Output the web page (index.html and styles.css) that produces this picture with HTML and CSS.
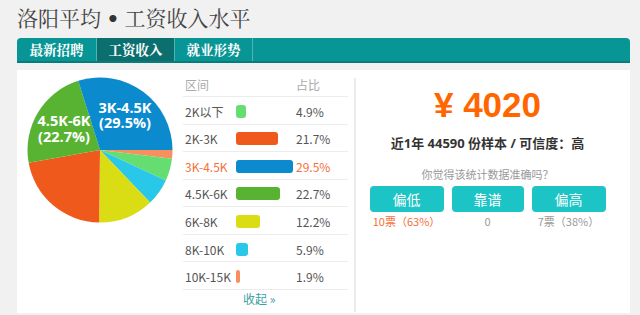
FILE: index.html
```html
<!DOCTYPE html>
<html lang="zh">
<head>
<meta charset="utf-8">
<title>洛阳平均工资收入水平</title>
<link rel="stylesheet" href="styles.css">
</head>
<body>
<h1 class="title">洛阳平均 <span class="dot">•</span> 工资收入水平</h1>
<nav class="nav">
  <a class="tab">最新招聘</a>
  <a class="tab active">工资收入</a>
  <a class="tab">就业形势</a>
</nav>
<div class="content">
  <div class="left">
    <svg class="pie" width="150" height="150" viewBox="0 0 150 150">
      <path d="M75 75 L147.5 75 A72.5 72.5 0 0 1 146.97 83.74 Z" fill="#f88f5e"/>
      <path d="M75 75 L146.97 83.74 A72.5 72.5 0 0 1 140.83 105.38 Z" fill="#66dd70"/>
      <path d="M75 75 L140.83 105.38 A72.5 72.5 0 0 1 125.12 127.39 Z" fill="#2ac8e8"/>
      <path d="M75 75 L125.12 127.39 A72.5 72.5 0 0 1 74.08 147.49 Z" fill="#dadd14"/>
      <path d="M75 75 L74.08 147.49 A72.5 72.5 0 0 1 3.65 87.84 Z" fill="#ef5a1c"/>
      <path d="M75 75 L3.65 87.84 A72.5 72.5 0 0 1 53.21 5.85 Z" fill="#58b333"/>
      <path d="M75 75 L53.21 5.85 A72.5 72.5 0 0 1 147.5 75 Z" fill="#0b8bcd"/>
      <text class="plabel"><tspan x="100" y="38">3K-4.5K</tspan><tspan x="100" y="53">(29.5%)</tspan></text>
      <text class="plabel"><tspan x="39" y="51">4.5K-6K</tspan><tspan x="39" y="67">(22.7%)</tspan></text>
    </svg>
    <div class="table">
      <div class="row head"><span class="c1">区间</span><span class="c2"></span><span class="c3">占比</span></div>
      <div class="row"><span class="c1">2K以下</span><span class="c2"><i class="bar" style="width:10px;background:#66dd70"></i></span><span class="c3">4.9%</span></div>
      <div class="row"><span class="c1">2K-3K</span><span class="c2"><i class="bar" style="width:42px;background:#ef5a1c"></i></span><span class="c3">21.7%</span></div>
      <div class="row hl"><span class="c1">3K-4.5K</span><span class="c2"><i class="bar" style="width:57px;background:#0b8bcd"></i></span><span class="c3">29.5%</span></div>
      <div class="row"><span class="c1">4.5K-6K</span><span class="c2"><i class="bar" style="width:44px;background:#58b333"></i></span><span class="c3">22.7%</span></div>
      <div class="row"><span class="c1">6K-8K</span><span class="c2"><i class="bar" style="width:24px;background:#dadd14"></i></span><span class="c3">12.2%</span></div>
      <div class="row"><span class="c1">8K-10K</span><span class="c2"><i class="bar" style="width:12px;background:#2ac8e8"></i></span><span class="c3">5.9%</span></div>
      <div class="row"><span class="c1">10K-15K</span><span class="c2"><i class="bar thin" style="width:4px;background:#f88f5e"></i></span><span class="c3">1.9%</span></div>
      <a class="fold">收起 »</a>
    </div>
  </div>
  <div class="sep"></div>
  <div class="right">
    <div class="price">¥ 4020</div>
    <div class="sub">近1年 44590 份样本 / 可信度：高</div>
    <div class="ask">你觉得该统计数据准确吗？</div>
    <div class="btns">
      <a class="btn w74">偏低</a>
      <a class="btn w72">靠谱</a>
      <a class="btn w74">偏高</a>
    </div>
    <div class="votes">
      <span class="w74 hot">10票（63%）</span>
      <span class="w72">0</span>
      <span class="w74">7票（38%）</span>
    </div>
  </div>
</div>
</body>
</html>
```
FILE: styles.css
```css
* { box-sizing: border-box; }
body {
  margin: 0;
  padding: 0 10px 0 17px;
  background: #f1f1f1;
  font-family: "Open Sans", "Noto Sans CJK SC", sans-serif;
  color: #555;
}
.title {
  margin: 0;
  height: 38px;
  line-height: 35px;
  font-size: 21px;
  font-weight: normal;
  color: #444;
  font-family: "Noto Serif CJK SC", "Noto Sans CJK SC", serif;
}
.title .dot {
  font-family: "DejaVu Sans", sans-serif;
  font-size: 20px;
  font-weight: bold;
  color: #333;
}
.nav {
  display: flex;
  width: 613px;
  height: 25px;
  background: #089595;
  border-radius: 4px 4px 0 0;
  border-bottom: 2px solid #0a7b7b;
}
.tab {
  width: 80px;
  text-align: center;
  color: #fff;
  font-weight: bold;
  font-size: 13.5px;
  line-height: 23px;
  font-family: "Noto Serif CJK SC", "Noto Sans CJK SC", serif;
  border-right: 1px solid #53b3b3;
}
.tab + .tab { width: 78px; }
.tab.active { background: #0b6e6f; }
.content {
  display: flex;
  width: 613px;
  height: 243px;
  margin-top: 7px;
  background: #fff;
}
.left {
  width: 336px;
  display: flex;
  align-items: flex-start;
}
.pie { margin: 5px 0 0 8px; flex: none; }
.plabel {
  fill: #fff;
  font-family: "Open Sans", sans-serif;
  font-weight: bold;
  font-size: 14.5px;
  text-anchor: middle;
}
.table {
  width: 165px;
  margin: 3px 0 0 8px;
  font-size: 12px;
  font-family: "Noto Sans CJK SC", sans-serif;
}
.row {
  display: flex;
  align-items: center;
  height: 27.57px;
  padding-top: 2px;
  border-bottom: 1px solid #ececec;
  color: #555;
}
.row.head { height: 24px; padding-top: 0; color: #aaa; }
.row.hl { color: #f4703a; }
.c1 { width: 53px; padding-left: 2px; }
.c2 { width: 60px; display: flex; }
.c3 { flex: 1; }
.bar { display: block; height: 13px; border-radius: 3px; }
.bar.thin { border-radius: 2px; }
.fold {
  display: block;
  padding-left: 60px;
  line-height: 18px;
  margin-top: 0;
  color: #3a9fa3;
  font-size: 12px;
}
.sep {
  width: 2px;
  margin: 8px 0 1px 1px;
  background: #ebebeb;
}
.right {
  flex: 1;
  padding: 14px 11px 0 0;
  text-align: center;
}
.price {
  line-height: 42px;
  font-size: 35px;
  font-weight: bold;
  color: #ff6600;
  font-family: "Liberation Sans", "Noto Sans CJK SC", sans-serif;
}
.sub {
  margin-top: 7px;
  line-height: 20px;
  font-size: 13px;
  font-weight: bold;
  color: #333;
  font-family: "Open Sans", "Noto Sans CJK SC", sans-serif;
}
.ask {
  margin-top: 12px;
  line-height: 18px;
  font-size: 11px;
  color: #999;
  font-family: "Noto Sans CJK SC", sans-serif;
}
.btns {
  display: flex;
  justify-content: center;
  gap: 8px;
  margin-top: 3px;
}
.btn {
  height: 26px;
  line-height: 26px;
  border-radius: 4px;
  background: #1cc4c5;
  color: #fff;
  font-size: 14px;
  font-family: "Noto Sans CJK SC", sans-serif;
}
.w74 { width: 74px; }
.w72 { width: 72px; }
.votes {
  display: flex;
  justify-content: center;
  gap: 8px;
  margin-top: 1px;
  line-height: 16px;
  font-size: 11px;
  color: #999;
  font-family: "Noto Sans CJK SC", sans-serif;
}
.votes .hot { color: #f4703a; }
```
